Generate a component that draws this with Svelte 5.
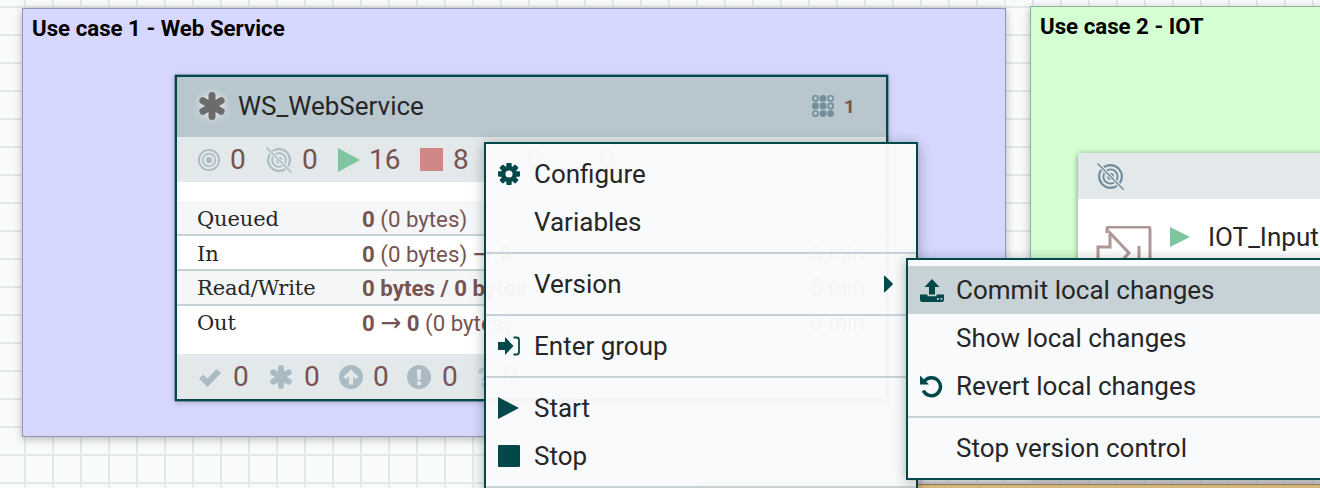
<script>
  const gearTeeth = [0, 45, 90, 135, 180, 225, 270, 315];
  const circles = [
    [0,0,0],[1,0,1],[2,0,0],
    [0,1,1],[1,1,1],[2,1,0],
    [0,2,0],[1,2,1],[2,2,1]
  ];
</script>

{#snippet target(size, color, slashed, halo)}
  <svg width={size} height={size} viewBox="0 0 28 28" class="ico">
    <g fill="none" stroke={color}>
      <circle cx="14" cy="14" r="11.8" stroke-width="2.2"/>
      <circle cx="14" cy="14" r="7.400" stroke-width="2"/>
      <circle cx="14" cy="14" r="3.600" fill={color} stroke="none"/>
      {#if slashed}
        <line x1="1.500" y1="1.500" x2="26.500" y2="26.500" stroke={halo} stroke-width="4"/>
        <line x1="0.500" y1="0.500" x2="27.500" y2="27.500" stroke-width="1.600"/>
      {/if}
    </g>
  </svg>
{/snippet}

{#snippet asterisk(size, color)}
  <svg width={size} height={size} viewBox="0 0 28 28" class="ico">
    <g stroke={color} stroke-width="7" stroke-linecap="round">
      <line x1="14" y1="3.500" x2="14" y2="24.500"/>
      <line x1="4.900" y1="8.700" x2="23.100" y2="19.300"/>
      <line x1="4.900" y1="19.300" x2="23.100" y2="8.700"/>
    </g>
  </svg>
{/snippet}

<div class="canvas">
  <div class="group g1">
    <div class="group-label">Use case 1 - Web Service</div>
  </div>

  <div class="group g2">
    <div class="group-label">Use case 2 - IOT</div>
  </div>

  <div class="group g3"></div>

  <div class="proc">
    <div class="proc-head">
      {@render target(27, '#728e9b', true, '#e3e8eb')}
    </div>
    <div class="proc-body">
      <svg width="56" height="62" viewBox="0 0 56 62" class="port">
        <g fill="none" stroke="#ad9897" stroke-width="3">
          <path d="M11 7V3q0-2 2-2h39q2 0 2 2v58"/>
          <path d="M2 21h12V7l19 20-19 20V35H2z"/>
          <line x1="43" y1="20" x2="43" y2="56"/>
        </g>
      </svg>
      <svg width="20" height="20" viewBox="0 0 20 20" class="ico play-s"><path d="M0 0L20 10L0 20z" fill="#7dc7a0"/></svg>
      <span class="proc-name">IOT_Input</span>
    </div>
  </div>

  <div class="pg">
    <div class="pg-head">
      <span class="glow">{@render asterisk(28, '#6b6b6b')}</span>
      <span class="pg-name">WS_WebService</span>
      <span class="spacer"></span>
      <svg width="22" height="22" viewBox="0 0 22 22" class="ico">
        {#each circles as [c, r, filled]}
          <circle cx={3.4 + c * 7.6} cy={3.4 + r * 7.6} r={filled ? 3.4 : 2.6}
            fill={filled ? '#728e9b' : 'none'} stroke={filled ? 'none' : '#728e9b'} stroke-width="1.6"/>
        {/each}
      </svg>
      <span class="ver">1</span>
    </div>

    <div class="pg-stats">
      <span class="st i1">{@render target(24, '#aabbc3', false, '')}<b>0</b></span>
      <span class="st i2">{@render target(26, '#aabbc3', true, '#e3e8eb')}<b>0</b></span>
      <span class="st i3"><svg width="22" height="24" viewBox="0 0 22 24" class="ico"><path d="M0 0L22 12L0 24z" fill="#7dc7a0"/></svg><b>16</b></span>
      <span class="st i4"><span class="stop-box"></span><b>8</b></span>
      <span class="st i5">{@render target(24, '#aabbc3', false, '')}<b>0</b></span>
      <span class="st i6">{@render target(26, '#aabbc3', true, '#e3e8eb')}<b>0</b></span>
    </div>

    <div class="pg-gap"></div>

    <div class="row alt r1">
      <span class="lbl">Queued</span>
      <span class="val"><b>0</b> (0 bytes)</span>
    </div>
    <div class="row r2">
      <span class="lbl">In</span>
      <span class="val"><b>0</b> (0 bytes) <span class="arr">→</span> <b>0</b></span>
      <span class="age">5 min</span>
    </div>
    <div class="row alt r3">
      <span class="lbl">Read/Write</span>
      <span class="val"><b>0 bytes / 0 bytes</b></span>
      <span class="age">5 min</span>
    </div>
    <div class="row last">
      <span class="lbl">Out</span>
      <span class="val"><b>0</b> <span class="arr">→</span> <b>0</b> (0 bytes)</span>
      <span class="age">5 min</span>
    </div>

    <div class="pg-foot">
      <span class="ft f1">
        <svg width="24" height="20" viewBox="0 0 24 20" class="ico"><path d="M3.200 9.500l6.300 6.300L20.800 4" fill="none" stroke="#aabbc3" stroke-width="6"/></svg>
        <b>0</b>
      </span>
      <span class="ft f2">{@render asterisk(24, '#aabbc3')}<b>0</b></span>
      <span class="ft f3">
        <svg width="24" height="24" viewBox="0 0 24 24" class="ico"><circle cx="12" cy="12" r="12" fill="#aabbc3"/><path d="M12 4.500l7.500 7.500-2.400 2.200-3-3V19.500h-4.200v-8.300l-3 3L4.500 12z" fill="#e3e8eb"/></svg>
        <b>0</b>
      </span>
      <span class="ft f4">
        <svg width="24" height="24" viewBox="0 0 24 24" class="ico"><circle cx="12" cy="12" r="12" fill="#aabbc3"/><path d="M9.800 4.500h4.400l-.7 10.500h-3z" fill="#e3e8eb"/><rect x="10" y="16.200" width="4" height="3.800" rx="0.600" fill="#e3e8eb"/></svg>
        <b>0</b>
      </span>
      <span class="ft f5">
        <svg width="16" height="24" viewBox="0 0 16 24" class="ico"><path d="M2 8c0-7 12-7 12 0 0 5-5 4-5 8H6c0-6 4-5 4-8 0-2-4-2-4 1z" fill="#aabbc3"/><rect x="5.600" y="18" width="4" height="4" fill="#aabbc3"/></svg>
        <b>0</b>
      </span>
    </div>
  </div>

  <div class="menu main">
    <div class="item">
      <span class="mi">
        <svg width="22" height="22" viewBox="0 0 22 22">
          {#each gearTeeth as a}
            <rect x="8.600" y="0" width="4.800" height="22" rx="0.800" fill="#004849" transform="rotate({a} 11 11)"/>
          {/each}
          <circle cx="11" cy="11" r="8" fill="#004849"/>
          <circle cx="11" cy="11" r="3.600" fill="#f9fafb"/>
        </svg>
      </span>
      Configure
    </div>
    <div class="item"><span class="mi"></span>Variables</div>
    <div class="sep"></div>
    <div class="item">
      <span class="mi"></span>Version
      <svg width="9" height="18" viewBox="0 0 9 18" class="arrow"><path d="M0 1.500Q0 0 1 1L8.500 8.300Q9.200 9 8.500 9.700L1 17Q0 18 0 16.500z" fill="#004849"/></svg>
    </div>
    <div class="sep"></div>
    <div class="item">
      <span class="mi">
        <svg width="22" height="20" viewBox="0 0 22 20">
          <path d="M0 6h7V1l8.500 9L7 19v-5H0z" fill="#004849"/>
          <path d="M15.500 1.500h3q2.500 0 2.500 2.500v12q0 2.500-2.500 2.500h-3" fill="none" stroke="#004849" stroke-width="1.800"/>
        </svg>
      </span>
      Enter group
    </div>
    <div class="sep"></div>
    <div class="item">
      <span class="mi"><svg width="21" height="22" viewBox="0 0 21 22"><path d="M0 0L21 11L0 22z" fill="#004849"/></svg></span>
      Start
    </div>
    <div class="item">
      <span class="mi"><span class="stop-menu"></span></span>
      Stop
    </div>
    <div class="sep"></div>
  </div>

  <div class="menu sub">
    <div class="item hover">
      <span class="mi">
        <svg width="24" height="24" viewBox="0 0 24 24">
          <path d="M12 1l7.500 8H15v7.500H9V9H4.500z" fill="#004849"/>
          <path d="M0 16.500h7.500v1.800h9v-1.800H24V22q0 2-2 2H2q-2 0-2-2z" fill="#004849"/>
          <rect x="17" y="20" width="1.800" height="1.800" fill="#c7d2d7"/>
          <rect x="20.500" y="20" width="1.800" height="1.800" fill="#c7d2d7"/>
        </svg>
      </span>
      Commit local changes
    </div>
    <div class="item"><span class="mi"></span>Show local changes</div>
    <div class="item">
      <span class="mi">
        <svg width="23" height="23" viewBox="0 0 23 23">
          <path d="M4.400 6.200A9 9 0 1 1 3.300 15.500" fill="none" stroke="#004849" stroke-width="3.400"/>
          <path d="M0 0.500V9.500H9z" fill="#004849"/>
        </svg>
      </span>
      Revert local changes
    </div>
    <div class="sep"></div>
    <div class="item"><span class="mi"></span>Stop version control</div>
  </div>
</div>

<style>
  :global(body) { margin: 0; }
  .canvas {
    position: relative;
    width: 1320px;
    height: 488px;
    overflow: hidden;
    background-color: #f9fafb;
    background-image:
      linear-gradient(to right, #e3e8eb 2px, transparent 2px),
      linear-gradient(to bottom, #e3e8eb 2px, transparent 2px);
    background-size: 28px 28px;
    background-position: 24px 6px;
    font-family: Roboto, sans-serif;
    color: #262626;
  }
  .ico { display: block; flex: none; }
  b { font-weight: 700; }

  .group {
    position: absolute;
    box-sizing: border-box;
    border: 1px solid rgba(0, 0, 0, 0.3);
    box-shadow: 0 2px 8px rgba(0, 0, 0, 0.28);
  }
  .g1 { left: 22px; top: 8px; width: 984px; height: 429px; background: #d5d7ff; }
  .g2 { left: 1030px; top: 6px; width: 340px; height: 470px; background: #d3ffd3; }
  .g3 { left: 700px; top: 484px; width: 700px; height: 60px; background: #e8c287; }
  .group-label {
    padding: 6px 9px;
    font-size: 22.250px;
    line-height: 26px;
    font-weight: 700;
    color: #000;
  }

  .proc {
    position: absolute;
    left: 1078px;
    top: 153px;
    width: 320px;
    height: 200px;
    background: #fff;
    box-shadow: 0 1px 6px rgba(0, 0, 0, 0.4);
  }
  .proc-head {
    height: 46px;
    background: #e3e8eb;
    display: flex;
    align-items: center;
    padding-left: 19px;
  }
  .proc-body {
    display: flex;
    align-items: flex-start;
    padding: 27px 0 0 18px;
  }
  .play-s { margin: 1px 0 0 18px; }
  .proc-name { margin-left: 18px; font-size: 26px; line-height: 22px; }

  .pg {
    position: absolute;
    left: 175px;
    top: 75px;
    width: 713px;
    height: 326px;
    box-sizing: border-box;
    border: 2.500px solid #004849;
    display: flex;
    flex-direction: column;
    background: #fff;
    box-shadow: 0 0 0 0.350px #004849, 0 1px 6px rgba(0, 0, 0, 0.25);
  }
  .pg-head {
    height: 60px;
    box-sizing: border-box;
    flex: none;
    background: #b8c6cd;
    display: flex;
    align-items: center;
    padding: 0 31px 2px 21px;
  }
  .glow { display: block; filter: drop-shadow(0 0 4px rgba(255, 255, 255, 0.7)); }
  .pg-name { margin-left: 12px; font-size: 26px; }
  .spacer { flex: 1; }
  .ver { margin-left: 10px; font-size: 19px; font-weight: 700; color: #775351; }

  .pg-stats {
    position: relative;
    height: 45px;
    flex: none;
    background: #e3e8eb;
    font-size: 28px;
    color: #775351;
  }
  .st {
    position: absolute;
    top: 0;
    height: 45px;
    display: flex;
    align-items: center;
  }
  .st b { font-weight: 400; }
  .i1 { left: 20px; gap: 9px; }
  .i2 { left: 89px; gap: 10px; }
  .i3 { left: 161px; gap: 9px; }
  .i4 { left: 243px; gap: 10px; }
  .i5 { left: 315px; gap: 10px; opacity: 0.5; }
  .i6 { left: 386px; gap: 10px; opacity: 0.5; }
  .stop-box { display: block; width: 23px; height: 23px; background: #d18686; }

  .pg-gap { height: 19px; flex: none; }
  .row {
    position: relative;
    height: 35px;
    box-sizing: border-box;
    flex: none;
    display: flex;
    align-items: center;
    padding: 0 0 0 20px;
    border-bottom: 2px solid #c7d2d7;
    background: #fff;
    font-size: 22px;
  }
  .row.alt { background: #f4f6f7; }
  .r1, .r2 { padding-top: 2px; }
  .row.last { border-bottom: none; padding-bottom: 2px; }
  .lbl {
    width: 165px;
    flex: none;
    font-family: "DejaVu Serif", serif;
    font-size: 21px;
    letter-spacing: -0.100px;
    color: #262626;
  }
  .val { color: #775351; font-size: 22.250px; line-height: 28px; white-space: nowrap; }
  .arr { font-family: "DejaVu Sans", sans-serif; font-size: 25px; line-height: 0; }
  .age { position: absolute; left: 633px; color: #775351; font-size: 22px; }

  .pg-foot {
    position: relative;
    margin-top: auto;
    height: 45px;
    flex: none;
    background: #e3e8eb;
    color: #775351;
    font-size: 28px;
  }
  .ft {
    position: absolute;
    top: 0;
    height: 45px;
    display: flex;
    align-items: center;
  }
  .ft b { font-weight: 400; }
  .f1 { left: 21px; gap: 11px; }
  .f2 { left: 92px; gap: 11px; }
  .f3 { left: 162px; gap: 10px; }
  .f4 { left: 230px; gap: 11px; }
  .f5 { left: 299px; gap: 10px; opacity: 0.6; }

  .menu {
    position: absolute;
    box-sizing: border-box;
    border: 2px solid #004849;
    padding: 6px 0;
    background: rgba(249, 250, 251, 0.97);
    box-shadow: 0 2px 12px rgba(0, 0, 0, 0.3);
    font-size: 26px;
  }
  .main { left: 484px; top: 142px; width: 434px; height: 360px; }
  .sub { left: 906px; top: 258px; width: 440px; height: 222px; background: #f9fafb; z-index: 1; }
  .item {
    position: relative;
    height: 48px;
    display: flex;
    align-items: center;
    color: #262626;
    white-space: nowrap;
  }
  .item.hover { background: #c7d2d7; }
  .mi {
    width: 48px;
    flex: none;
    display: flex;
    justify-content: flex-start;
    padding-left: 12px;
    box-sizing: border-box;
  }
  .mi svg { display: block; }
  .stop-menu { display: block; width: 22px; height: 22px; border-radius: 1px; background: #004849; }
  .arrow { position: absolute; left: 398px; top: 15px; }
  .sep { height: 2px; margin: 6px 0; background: #c7d2d7; }
</style>
